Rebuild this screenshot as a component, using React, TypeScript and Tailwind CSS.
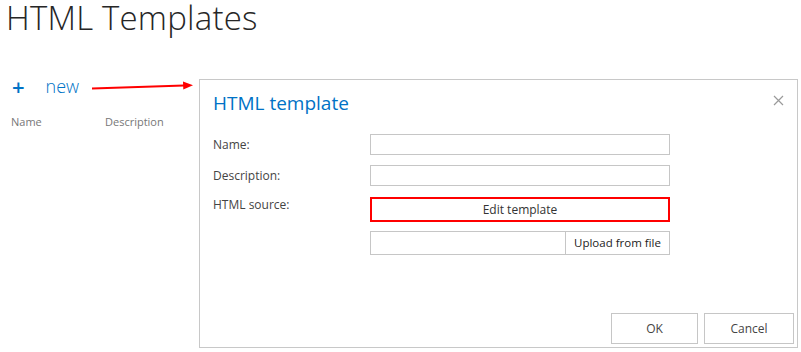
import React from 'react';

function Field({ label }: { label: string }) {
    return (
        <div className="flex items-center h-[21px]">
            <span className="w-[157px] text-[12px] text-[#444]">{label}</span>
            <div className="w-[300px] h-[21px] border border-[#c6c6c6] bg-white"></div>
        </div>
    );
}

export default function App() {
    return (
        <div className="relative w-[801px] h-[352px] bg-white overflow-hidden" style={{ fontFamily: '"Open Sans", "Liberation Sans", sans-serif' }}>
            <h1 className="pl-[6px] text-[33px] font-light leading-[36px] text-[#262626] tracking-[0.2px]">HTML Templates</h1>
            <div className="flex mt-[43px]">
                <div className="w-[199px]">
                    <div className="flex items-center pl-[12px] h-[16px] -mt-[1px]">
                        <span className="text-[#0072c6] text-[22px] font-semibold leading-none">+</span>
                        <span className="ml-[21px] text-[#0072c6] text-[18px] font-light leading-none">new</span>
                    </div>
                    <div className="flex pl-[11px] mt-[20px] text-[11px] text-[#777]">
                        <span className="w-[94px]">Name</span>
                        <span>Description</span>
                    </div>
                </div>
                <div className="w-[599px] h-[269px] border border-[#c8c8c8] flex flex-col pl-[13px] pr-[3px] pb-[3px]">
                    <div className="flex items-start justify-between pr-[10px]">
                        <h2 className="mt-[10px] text-[19px] leading-[26px] text-[#0072c6]">HTML template</h2>
                        <svg className="mt-[15px]" width="11" height="11" viewBox="0 0 11 11">
                            <path d="M1 1 L10 10 M10 1 L1 10" stroke="#9a9a9a" strokeWidth="1.2" />
                        </svg>
                    </div>
                    <div className="mt-[18px] flex flex-col gap-[10px]">
                        <Field label="Name:" />
                        <Field label="Description:" />
                    </div>
                    <div className="flex mt-[11px]">
                        <span className="w-[157px] text-[12px] text-[#444] leading-[16px]">HTML source:</span>
                        <div className="flex flex-col gap-[9px]">
                            <button className="w-[300px] h-[25px] border-2 border-[#ff0000] bg-white text-[12px] text-[#333]">Edit template</button>
                            <div className="flex w-[300px] h-[24px] border border-[#c6c6c6]">
                                <div className="flex-1"></div>
                                <button className="w-[104px] border-l border-[#c6c6c6] bg-white text-[11.5px] text-[#222]">Upload from file</button>
                            </div>
                        </div>
                    </div>
                    <div className="mt-auto flex justify-end gap-[6px]">
                        <button className="w-[87px] h-[31px] border border-[#c6c6c6] bg-white text-[12px] text-[#444]">OK</button>
                        <button className="w-[90px] h-[31px] border border-[#c6c6c6] bg-white text-[12px] text-[#444]">Cancel</button>
                    </div>
                </div>
            </div>
            <svg className="absolute left-0 top-0 pointer-events-none" width="801" height="352">
                <path d="M92 88.5 L184 85.6" stroke="#ff0000" strokeWidth="2" />
                <path d="M193 85.3 L183 81.5 L183.3 89.5 Z" fill="#ff0000" />
            </svg>
        </div>
    );
}
